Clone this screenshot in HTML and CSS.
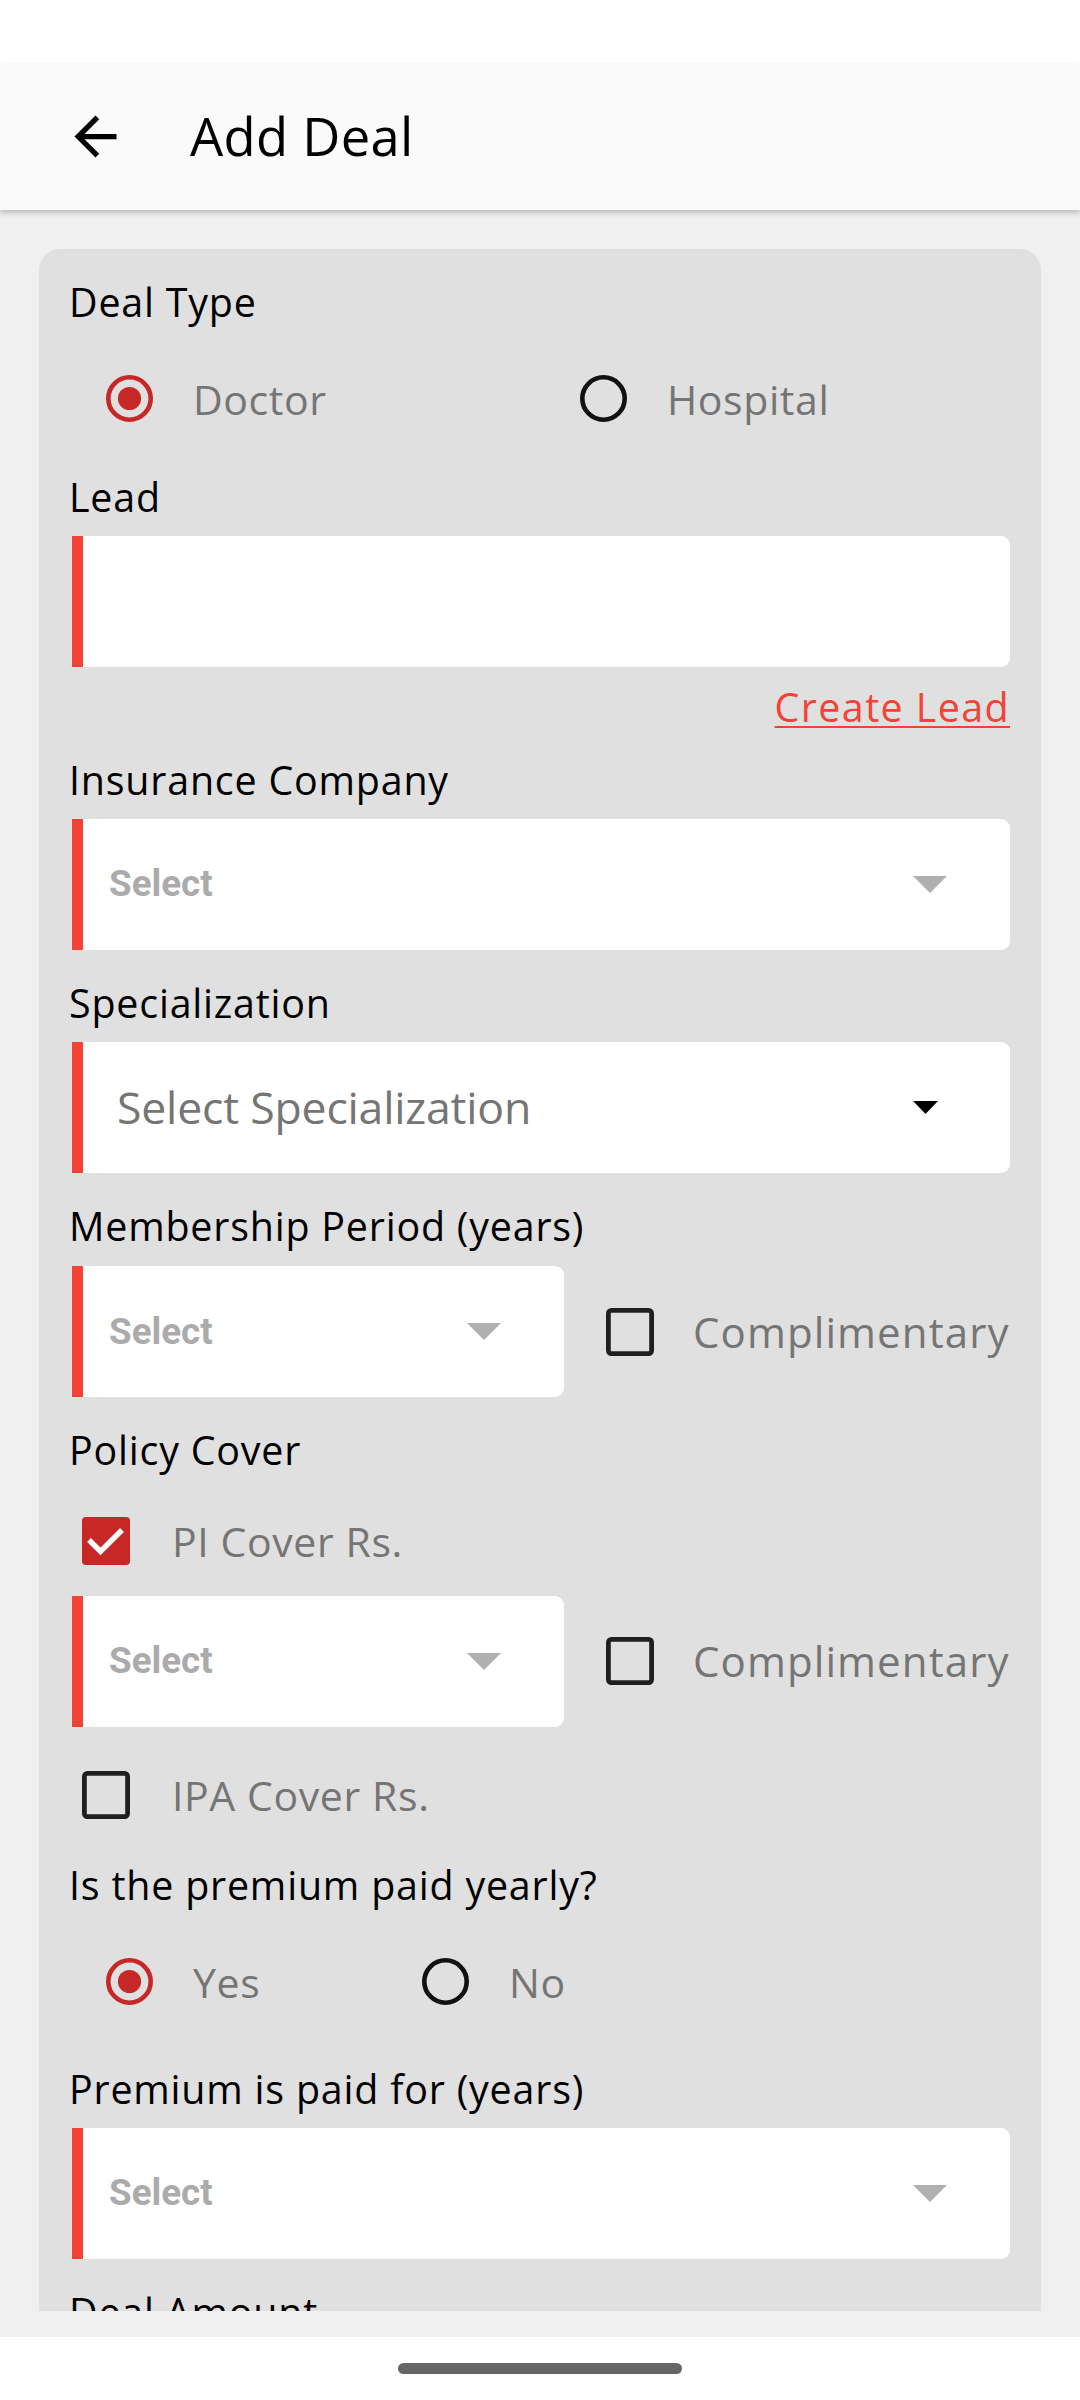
FILE: index.html
```html
<!DOCTYPE html>
<html lang="en">
<head>
<meta charset="utf-8">
<title>Add Deal</title>
<link rel="stylesheet" href="styles.css">
</head>
<body>
<div class="status"></div>
<header class="appbar">
  <svg class="back" viewBox="0 0 24 24"><path d="M20 11H7.83l5.59-5.59L12 4l-8 8 8 8 1.41-1.41L7.83 13H20v-2z" fill="#000"/></svg>
  <h1 class="title">Add Deal</h1>
</header>
<main class="viewport">
  <form class="card">
    <div class="label first">Deal Type</div>
    <div class="radio-row wide">
      <label class="opt">
        <svg class="radio" viewBox="0 0 47 47"><circle cx="23.5" cy="23.5" r="21.2" fill="none" stroke="#c62828" stroke-width="4.6"/><circle cx="23.5" cy="23.5" r="11.6" fill="#c62828"/></svg>
        <span class="opt-text">Doctor</span>
      </label>
      <label class="opt">
        <svg class="radio" viewBox="0 0 47 47"><circle cx="23.5" cy="23.5" r="21.2" fill="none" stroke="#111" stroke-width="4.6"/></svg>
        <span class="opt-text">Hospital</span>
      </label>
    </div>

    <div class="label after-radio">Lead</div>
    <div class="field input"></div>
    <a class="create-lead">Create Lead</a>

    <div class="label after-link">Insurance Company</div>
    <div class="field select">
      <span class="select-text">Select</span>
      <svg class="caret" viewBox="0 0 34 17"><polygon points="0,0 34,0 17,17" fill="#b0b0b0"/></svg>
    </div>

    <div class="label">Specialization</div>
    <div class="field spec">
      <span class="spec-text">Select Specialization</span>
      <svg class="caret-dark" viewBox="0 0 25 13"><polygon points="0,0 25,0 12.5,13" fill="#000"/></svg>
    </div>

    <div class="label">Membership Period (years)</div>
    <div class="split-row">
      <div class="field select half">
        <span class="select-text">Select</span>
        <svg class="caret" viewBox="0 0 34 17"><polygon points="0,0 34,0 17,17" fill="#b0b0b0"/></svg>
      </div>
      <svg class="box split-box" viewBox="0 0 48 48"><rect x="2.4" y="2.4" width="43.2" height="43.2" rx="3" fill="none" stroke="#1f1f1f" stroke-width="4.8"/></svg>
      <span class="opt-text comp">Complimentary</span>
    </div>

    <div class="label">Policy Cover</div>
    <div class="check-row">
      <svg class="box" viewBox="0 0 48 48"><rect x="0" y="0" width="48" height="48" rx="4" fill="#c62828"/><polyline points="7,23 18.5,34.5 40,13" fill="none" stroke="#fff" stroke-width="5.4"/></svg>
      <span class="opt-text check-text">PI Cover Rs.</span>
    </div>
    <div class="split-row after-check">
      <div class="field select half">
        <span class="select-text">Select</span>
        <svg class="caret" viewBox="0 0 34 17"><polygon points="0,0 34,0 17,17" fill="#b0b0b0"/></svg>
      </div>
      <svg class="box split-box" viewBox="0 0 48 48"><rect x="2.4" y="2.4" width="43.2" height="43.2" rx="3" fill="none" stroke="#1f1f1f" stroke-width="4.8"/></svg>
      <span class="opt-text comp">Complimentary</span>
    </div>
    <div class="check-row after-split">
      <svg class="box" viewBox="0 0 48 48"><rect x="2.4" y="2.4" width="43.2" height="43.2" rx="3" fill="none" stroke="#1f1f1f" stroke-width="4.8"/></svg>
      <span class="opt-text check-text">IPA Cover Rs.</span>
    </div>

    <div class="label after-check-row">Is the premium paid yearly?</div>
    <div class="radio-row narrow">
      <label class="opt">
        <svg class="radio" viewBox="0 0 47 47"><circle cx="23.5" cy="23.5" r="21.2" fill="none" stroke="#c62828" stroke-width="4.6"/><circle cx="23.5" cy="23.5" r="11.6" fill="#c62828"/></svg>
        <span class="opt-text">Yes</span>
      </label>
      <label class="opt">
        <svg class="radio" viewBox="0 0 47 47"><circle cx="23.5" cy="23.5" r="21.2" fill="none" stroke="#111" stroke-width="4.6"/></svg>
        <span class="opt-text">No</span>
      </label>
    </div>

    <div class="label after-radio-far">Premium is paid for (years)</div>
    <div class="field select">
      <span class="select-text">Select</span>
      <svg class="caret" viewBox="0 0 34 17"><polygon points="0,0 34,0 17,17" fill="#b0b0b0"/></svg>
    </div>

    <div class="label">Deal Amount</div>
    <div class="field input"></div>
  </form>
</main>
<div class="bottom-gap"></div>
<nav class="navbar"><div class="pill"></div></nav>
</body>
</html>
```
FILE: styles.css
```css
html, body {
  margin: 0;
  padding: 0;
}
body {
  width: 1080px;
  height: 2400px;
  overflow: hidden;
  background: #ffffff;
  font-family: "Open Sans", "Noto Sans", sans-serif;
  color: #000;
}

.status {
  height: 63px;
  background: #ffffff;
}

.appbar {
  position: relative;
  z-index: 1;
  height: 147px;
  background: #fafafa;
  display: flex;
  align-items: center;
  box-shadow: 0 3px 5px rgba(0, 0, 0, 0.22);
}
.back {
  width: 63px;
  height: 63px;
  margin-left: 64px;
  flex: none;
}
.title {
  margin: 0 0 0 63px;
  font-size: 52.5px;
  font-weight: 500;
  line-height: 52.5px;
  letter-spacing: 0.3px;
}

.viewport {
  height: 2101px;
  overflow: hidden;
  background: #f0f0f0;
  padding: 38.5px 39px 0;
  box-sizing: border-box;
}

.card {
  margin: 0;
  background: #e0e0e0;
  border-radius: 21px;
  padding: 26px 31px 80px 30px;
  display: flex;
  flex-direction: column;
}

.label {
  font-size: 39.4px;
  line-height: 54px;
  letter-spacing: 0.8px;
  color: #000;
  margin-top: 26px;
}
.label.first { margin-top: 0; }
.label.after-radio { margin-top: 31px; }
.label.after-link { margin-top: 19px; }
.label.after-check-row { margin-top: 23px; }
.label.after-radio-far { margin-top: 40.7px; }

.field {
  height: 131px;
  margin-top: 12px;
  margin-left: 3px;
  background: #ffffff;
  border-left: 11px solid #f44336;
  border-radius: 0 9px 9px 0;
  box-sizing: border-box;
  display: flex;
  align-items: center;
  justify-content: space-between;
}
.field.select {
  padding: 0 63px 0 26px;
}
.field.spec {
  padding: 0 72px 0 34px;
}
.field.half {
  width: 492px;
  flex: none;
  margin-top: 0;
}

.select-text {
  font-family: Roboto, "Liberation Sans", sans-serif;
  font-weight: 700;
  font-size: 36.75px;
  color: #ababab;
  line-height: 1;
}
.caret {
  width: 34px;
  height: 17px;
  flex: none;
}
.spec-text {
  font-size: 44.6px;
  color: #757575;
  line-height: 1;
  letter-spacing: -0.2px;
}
.caret-dark {
  width: 25px;
  height: 13px;
  flex: none;
}

.create-lead {
  margin-top: 13.7px;
  align-self: flex-end;
  font-size: 39.4px;
  line-height: 54px;
  letter-spacing: 1.4px;
  color: #f44336;
  text-decoration: underline;
  text-decoration-thickness: 2px;
  text-underline-offset: 4px;
}

.radio-row {
  display: grid;
  height: 80px;
  margin-top: 30px;
}
.radio-row.wide { grid-template-columns: 474px 1fr; }
.radio-row.narrow { grid-template-columns: 316px 1fr; margin-top: 29.3px; }

.opt {
  display: flex;
  align-items: center;
}
.radio {
  width: 47px;
  height: 47px;
  margin-left: 37px;
  flex: none;
}
.opt-text {
  margin-left: 40px;
  font-size: 41px;
  line-height: 54px;
  letter-spacing: 0.6px;
  color: #757575;
}

.split-row {
  display: flex;
  align-items: center;
  height: 131px;
  margin-top: 13.3px;
}
.split-row.after-check { margin-top: 15px; }
.box {
  width: 48px;
  height: 48px;
  flex: none;
}
.split-box {
  margin-left: 42px;
}
.opt-text.comp {
  margin-left: 39px;
  font-size: 42px;
  letter-spacing: 1.1px;
}

.check-row {
  display: flex;
  align-items: center;
  height: 80px;
  margin-top: 23.3px;
}
.check-row.after-split { margin-top: 28.5px; }
.check-row .box { margin-left: 13px; }
.opt-text.check-text { margin-left: 42px; }

.bottom-gap {
  height: 26px;
  background: #f0f0f0;
}
.navbar {
  height: 63px;
  background: #ffffff;
  display: flex;
  justify-content: center;
  align-items: center;
}
.pill {
  width: 284px;
  height: 11px;
  border-radius: 6px;
  background: #666666;
}
```
